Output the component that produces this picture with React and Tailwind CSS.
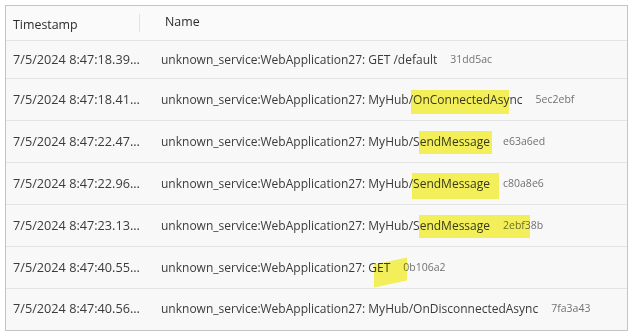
const rows = [
  { ts: '7/5/2024 8:47:18.39...', pre: 'unknown_service:WebApplication27: GET /default', hi: '', post: '', hash: '31dd5ac', h: 'h-[38px]' },
  { ts: '7/5/2024 8:47:18.41...', pre: 'unknown_service:WebApplication27: MyHub/', hi: 'OnConnectedAsy', post: 'nc', hash: '5ec2ebf', mark: 'left-[-2px] right-[0px] top-[-1px] bottom-[-5px]' },
  { ts: '7/5/2024 8:47:22.47...', pre: 'unknown_service:WebApplication27: MyHub/S', hi: 'endMessage', post: '', hash: 'e63a6ed', mark: 'left-[-1px] right-[-2px] top-[-2px] bottom-[-3px]' },
  { ts: '7/5/2024 8:47:22.96...', pre: 'unknown_service:WebApplication27: MyHub/', hi: 'SendMessage', post: '', hash: 'c80a8e6', mark: 'left-[-1px] right-[-9px] top-[-2px] bottom-[-6px]' },
  { ts: '7/5/2024 8:47:23.13...', pre: 'unknown_service:WebApplication27: MyHub/S', hi: 'endMessage', post: '', hash: '2ebf38b', mark: 'left-[-1px] right-[-40px] top-[-2px] bottom-[-3px]' },
  { ts: '7/5/2024 8:47:40.55...', pre: 'unknown_service:WebApplication27: G', hi: 'ET', post: '', hash: '0b106a2', mark: 'left-[-3px] right-[-17px] top-[2px] bottom-[-7px] -skew-y-12' },
  { ts: '7/5/2024 8:47:40.56...', pre: 'unknown_service:WebApplication27: MyHub/OnDisconnectedAsync', hi: '', post: '', hash: '7fa3a43', h: 'h-[41px]' },
];

function Row({ r }) {
  return (
    <div className={`flex items-center border-t border-[#e4e4e4] ${r.h || 'h-[42px]'}`}>
      <div className="w-[155px] pl-[7px] shrink-0 text-[12.7px] text-[#3b3b3b] whitespace-nowrap">{r.ts}</div>
      <div className="flex items-center whitespace-nowrap text-[12px] text-[#3b3b3b]">
        <span>{r.pre}</span>
        {r.hi && (
          <span className="relative">
            {r.hi}
            <span className={`absolute bg-[#f9f65c] mix-blend-multiply ${r.mark}`} />
          </span>
        )}
        <span>{r.post}</span>
        <span className="ml-[13px] text-[10.5px] text-[#727272]">{r.hash}</span>
      </div>
    </div>
  );
}

export default function App() {
  return (
    <div className="w-[635px] h-[335px] bg-white pt-[5px] pl-[5px]" style={{ fontFamily: '"Open Sans", "Noto Sans", sans-serif' }}>
      <div className="w-[623px] h-[326px] border border-[#c4c4c4] bg-[#f8f8f8] flex flex-col">
        <div className="h-[34px] flex items-center bg-[#fafafa]">
          <div className="w-[133px] pl-[7px] pt-[4px] text-[12.4px] text-[#2b2b2b]">Timestamp</div>
          <div className="w-px h-[18px] bg-[#e2e2e2]" />
          <div className="pl-[25px] pb-[2px] text-[12.4px] text-[#2b2b2b]">Name</div>
        </div>
        {rows.map((r) => (
          <Row key={r.hash} r={r} />
        ))}
      </div>
    </div>
  );
}
